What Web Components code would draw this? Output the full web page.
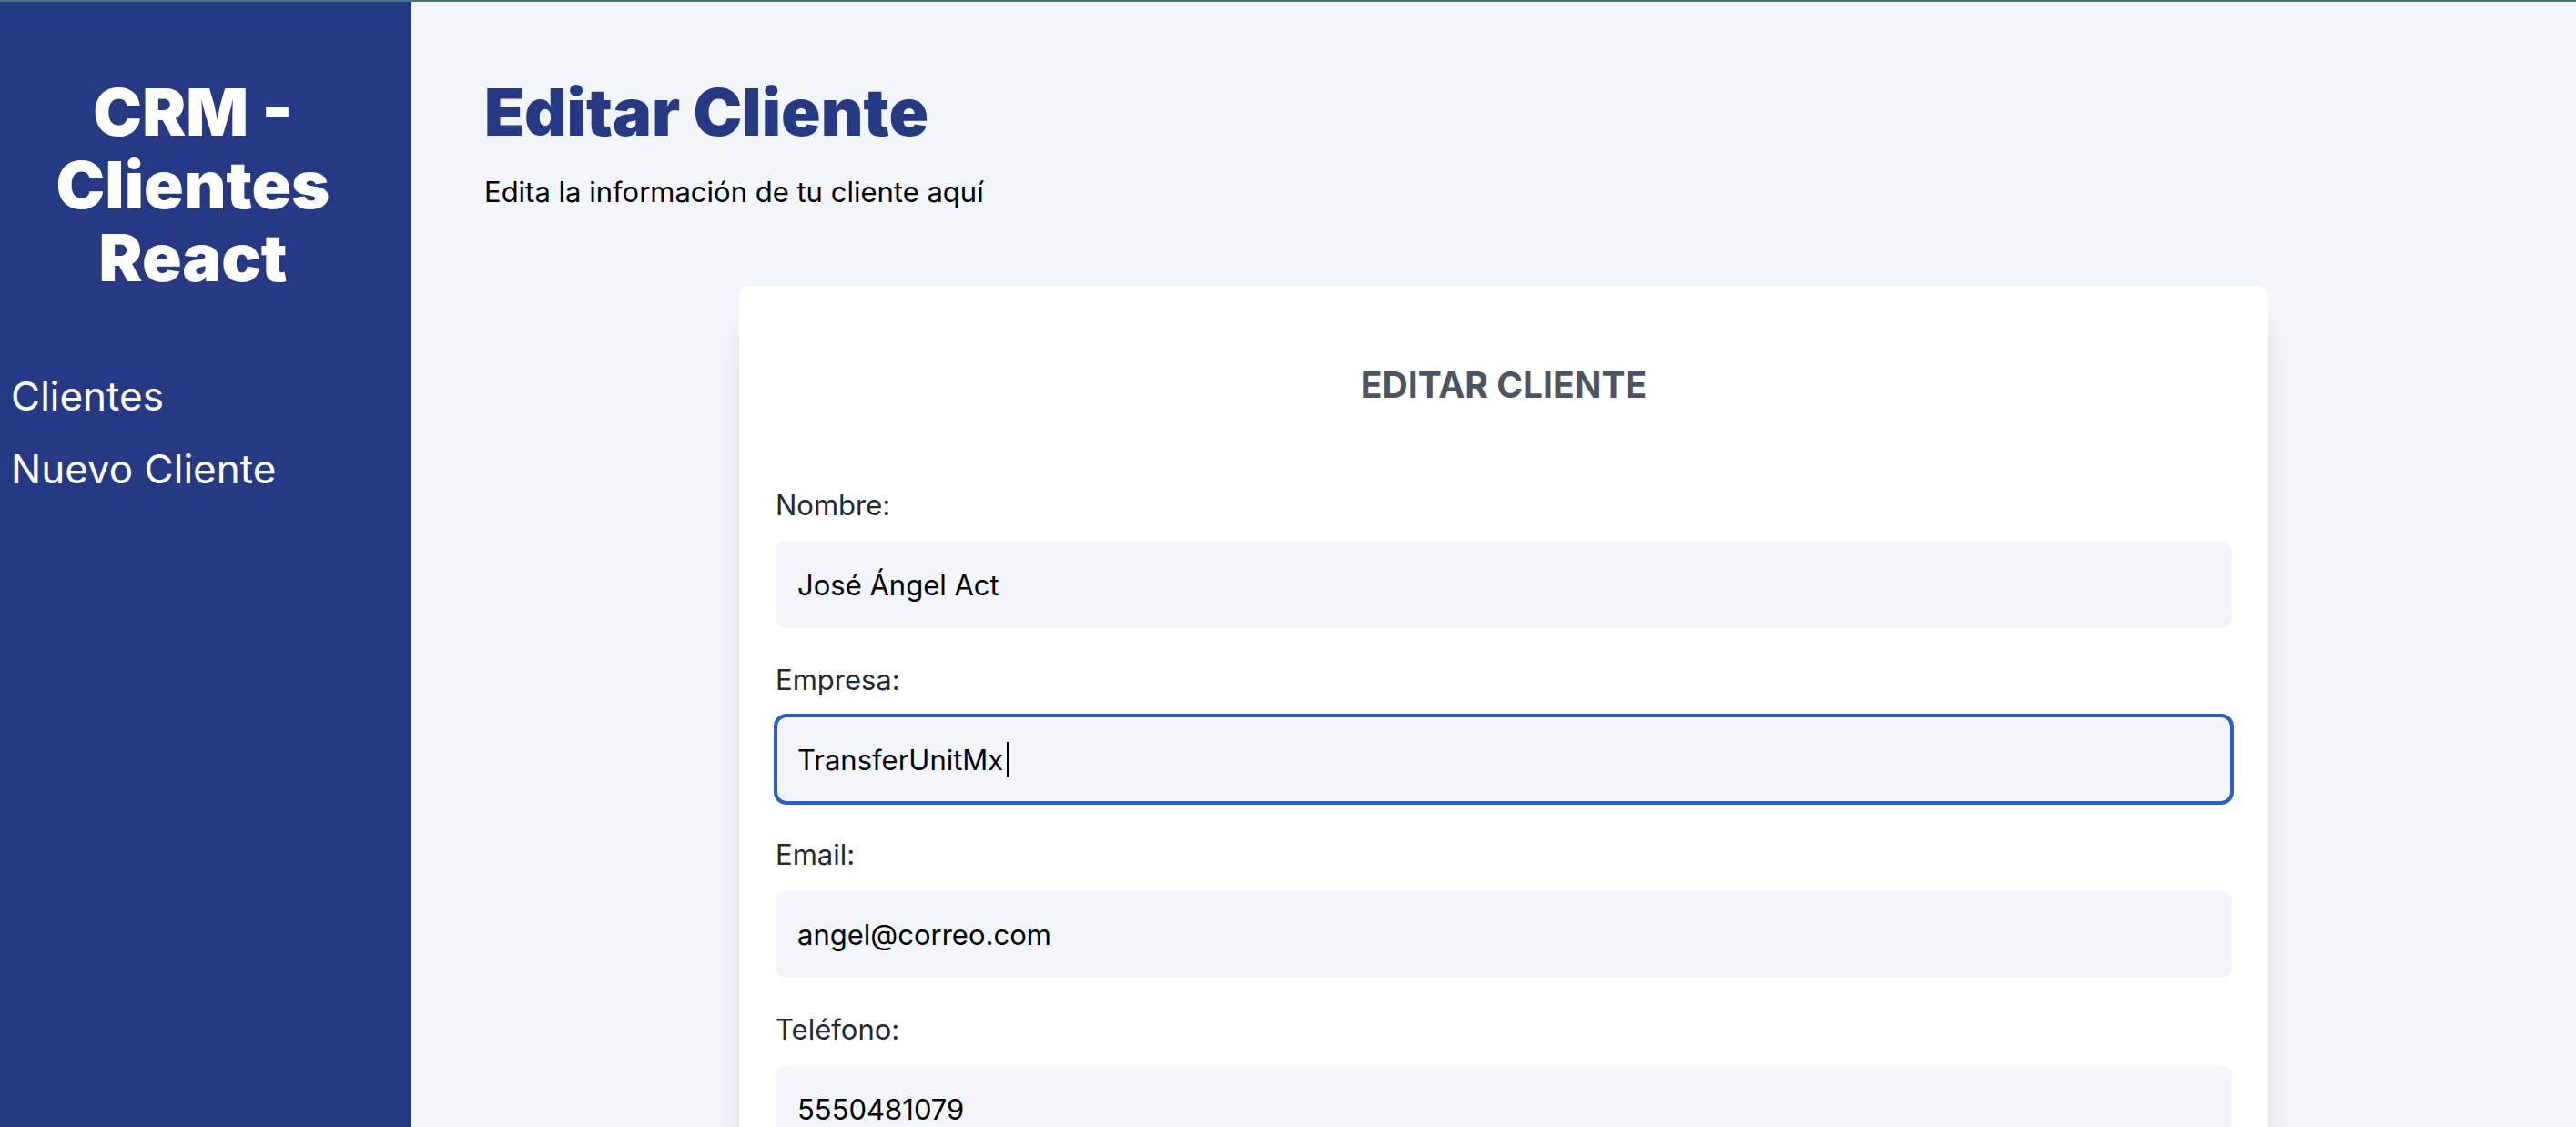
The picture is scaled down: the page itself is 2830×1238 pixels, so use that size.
<!DOCTYPE html>
<html lang="es">
<head>
<meta charset="utf-8">
<title>CRM - Clientes React</title>
<style>
  html, body { height: 100%; margin: 0; }
  body {
    overflow: hidden;
    font-family: Inter, "Liberation Sans", sans-serif;
    font-size: 31px;
    line-height: 48px;
    color: #000;
    --brand: #263984;
    --surface: #f2f5fa;
  }
</style>
</head>
<body>
<crm-layout>
  <crm-sidebar slot="sidebar" heading="CRM - Clientes React">
    <crm-nav-link href="#clientes">Clientes</crm-nav-link>
    <crm-nav-link href="#nuevo">Nuevo Cliente</crm-nav-link>
  </crm-sidebar>
  <crm-page-header heading="Editar Cliente">Edita la información de tu cliente aquí</crm-page-header>
  <crm-form-card heading="Editar Cliente">
    <crm-field label="Nombre:" value="José Ángel Act"></crm-field>
    <crm-field label="Empresa:" value="TransferUnitMx " active></crm-field>
    <crm-field label="Email:" type="email" value="angel@correo.com"></crm-field>
    <crm-field label="Teléfono:" type="tel" value="5550481079"></crm-field>
  </crm-form-card>
</crm-layout>

<script>
  const base = '*{box-sizing:border-box}h1,h2,p{margin:0}';

  function define(name, render) {
    customElements.define(name, class extends HTMLElement {
      connectedCallback() {
        if (this.shadowRoot) return;
        this.attachShadow({ mode: 'open' }).innerHTML = render(this);
      }
    });
  }

  define('crm-layout', () => `
    <style>${base}
      :host { display: flex; height: 100%; overflow: hidden; border-top: 2px solid #427684; background: var(--surface); box-sizing: border-box; }
      main { flex: 1; min-width: 0; padding: 81px 58px 80px 80px; }
      ::slotted([slot=sidebar]) { flex: 0 0 452px; }
    </style>
    <slot name="sidebar"></slot>
    <main><slot></slot></main>`);

  define('crm-sidebar', el => `
    <style>${base}
      :host { display: block; box-sizing: border-box; padding: 81px 40px 80px 12px; background: var(--brand); color: #fff; }
      h2 { font-size: 72px; line-height: 80px; font-weight: 900; text-align: center; }
      nav { display: flex; flex-direction: column; gap: 16px; margin-top: 80px; }
    </style>
    <h2>${el.getAttribute('heading')}</h2>
    <nav><slot></slot></nav>`);

  define('crm-nav-link', el => `
    <style>${base}
      :host { display: block; }
      a { display: block; color: inherit; text-decoration: none; font-size: 44px; line-height: 64px; }
    </style>
    <a href="${el.getAttribute('href')}"><slot></slot></a>`);

  define('crm-page-header', el => `
    <style>${base}
      :host { display: flex; flex-direction: column; gap: 24px; }
      h1 { font-size: 72px; line-height: 80px; font-weight: 900; color: var(--brand); }
    </style>
    <h1>${el.getAttribute('heading')}</h1>
    <p><slot></slot></p>`);

  define('crm-form-card', el => `
    <style>${base}
      :host { display: block; box-sizing: border-box; width: 75%; margin: 79px auto 0; padding: 81px 40px 80px; border-radius: 12px; background: #fff;
        box-shadow: 0 40px 50px -10px rgba(0,0,0,.1), 0 16px 20px -12px rgba(0,0,0,.1); }
      h2 { font-size: 39px; line-height: 56px; font-weight: 700; text-align: center; text-transform: uppercase; color: #4d5562; }
      form { display: flex; flex-direction: column; gap: 33px; margin-top: 80px; }
    </style>
    <h2>${el.getAttribute('heading')}</h2>
    <form><slot></slot></form>`);

  define('crm-field', el => `
    <style>${base}
      :host { display: flex; flex-direction: column; gap: 15px; color: #212936; }
      .box { position: relative; display: flex; }
      input { flex: 1; min-width: 0; height: 96px; margin: 0; padding: 24px; border: 0; border-radius: 12px; background: var(--surface); font: inherit; color: #000; outline: 0; }
      :host([active]) input, input:focus { outline: 4px solid #285fc8; outline-offset: -2px; }
      .caret { position: absolute; left: 254px; top: 29px; width: 2px; height: 38px; background: #000; }
    </style>
    <label for="control">${el.getAttribute('label')}</label>
    <div class="box">
      <input id="control" type="${el.getAttribute('type') || 'text'}" value="${el.getAttribute('value')}">
      ${el.hasAttribute('active') ? '<span class="caret"></span>' : ''}
    </div>`);
</script>
</body>
</html>
